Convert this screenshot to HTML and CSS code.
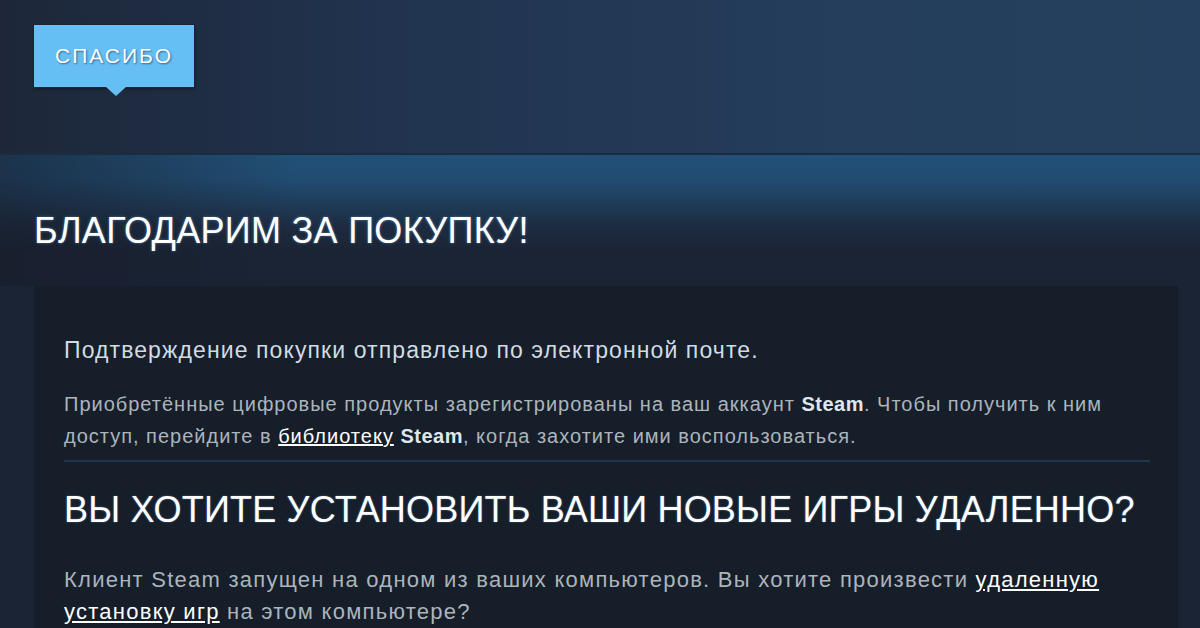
FILE: index.html
```html
<!DOCTYPE html>
<html lang="ru">
<head>
    <meta charset="UTF-8">
    <meta name="viewport" content="width=device-width, initial-scale=1.0">
    <title>Спасибо</title>
    <link rel="stylesheet" href="styles.css">
</head>
<body>
    <div class="top">
        <div class="tab">СПАСИБО</div>
    </div>

    <div class="band">
        <h1>БЛАГОДАРИМ ЗА ПОКУПКУ!</h1>
    </div>

    <div class="panel">
        <p class="lead">Подтверждение покупки отправлено по электронной почте.</p>
        <p class="note">Приобретённые цифровые продукты зарегистрированы на ваш аккаунт <b>Steam</b>. Чтобы получить к ним доступ, перейдите в <a href="#">библиотеку</a> <b>Steam</b>, когда захотите ими воспользоваться.</p>

        <h2>ВЫ ХОТИТЕ УСТАНОВИТЬ ВАШИ НОВЫЕ ИГРЫ УДАЛЕННО?</h2>
        <p class="remote">Клиент Steam запущен на одном из ваших компьютеров. Вы хотите произвести <a href="#">удаленную установку игр</a> на этом компьютере?</p>
    </div>
</body>
</html>
```

FILE: styles.css
```css
body {
    margin: 0;
    background: #1b2435;
    font-family: "Liberation Sans", Arial, sans-serif;
    color: #c6d4df;
    overflow: hidden;
}
.top {
    height: 155px;
    box-sizing: border-box;
    padding: 25px 34px 0;
    background: linear-gradient(90deg, #1d2739 0%, #213450 35%, #243e5b 70%, #25405e 100%);
    border-bottom: 2px solid #1a2c40;
}
.tab {
    position: relative;
    width: 160px;
    height: 62px;
    line-height: 62px;
    background: #66bff4;
    color: #fff;
    text-align: center;
    font-size: 21px;
    letter-spacing: 2px;
    text-shadow: 1px 1px 2px rgba(20, 40, 70, 0.6);
    box-shadow: 0 0 0 1px #1a2436, 1px 2px 3px rgba(0, 0, 0, 0.4);
}
.tab::after {
    content: "";
    position: absolute;
    left: 72px;
    bottom: -9px;
    border-left: 10px solid transparent;
    border-right: 10px solid transparent;
    border-top: 9px solid #66bff4;
}
.band {
    height: 131px;
    box-sizing: border-box;
    padding: 56px 34px 0;
    background:
        linear-gradient(90deg, rgba(22, 28, 40, 0.55) 0%, rgba(22, 28, 40, 0) 25%),
        linear-gradient(180deg, #225077 0px, #214c72 25px, #1f3b58 50px, #1d2b40 72px, #1b2435 95px);
}
h1 {
    margin: 0;
    font-size: 36px;
    line-height: 40px;
    font-weight: normal;
    color: #fff;
    letter-spacing: 0.3px;
    text-shadow: 0 0 3px rgba(120, 190, 240, 0.5);
}
.panel {
    margin: 0 22px 0 34px;
    padding: 52px 28px 40px 30px;
    background: #161e2a;
}
p {
    margin: 0;
}
.lead {
    font-size: 23px;
    line-height: 24px;
    letter-spacing: 1.1px;
    color: #d0dbe4;
}
.note {
    margin-top: 26px;
    padding-bottom: 8px;
    border-bottom: 2px solid #22344a;
    font-size: 20px;
    line-height: 32px;
    letter-spacing: 1px;
    color: #acb4bc;
}
.note b {
    font-weight: bold;
    letter-spacing: 0.5px;
    color: #dfe6ec;
}
a {
    color: #fff;
    text-decoration: underline;
}
h2 {
    margin: 28px 0 0;
    font-size: 36px;
    line-height: 40px;
    letter-spacing: 0.2px;
    font-weight: normal;
    color: #fff;
    text-shadow: 0 0 2px rgba(120, 190, 240, 0.5);
}
.remote {
    margin-top: 34px;
    font-size: 22px;
    line-height: 32px;
    letter-spacing: 1.25px;
    color: #acb4bc;
}
```
